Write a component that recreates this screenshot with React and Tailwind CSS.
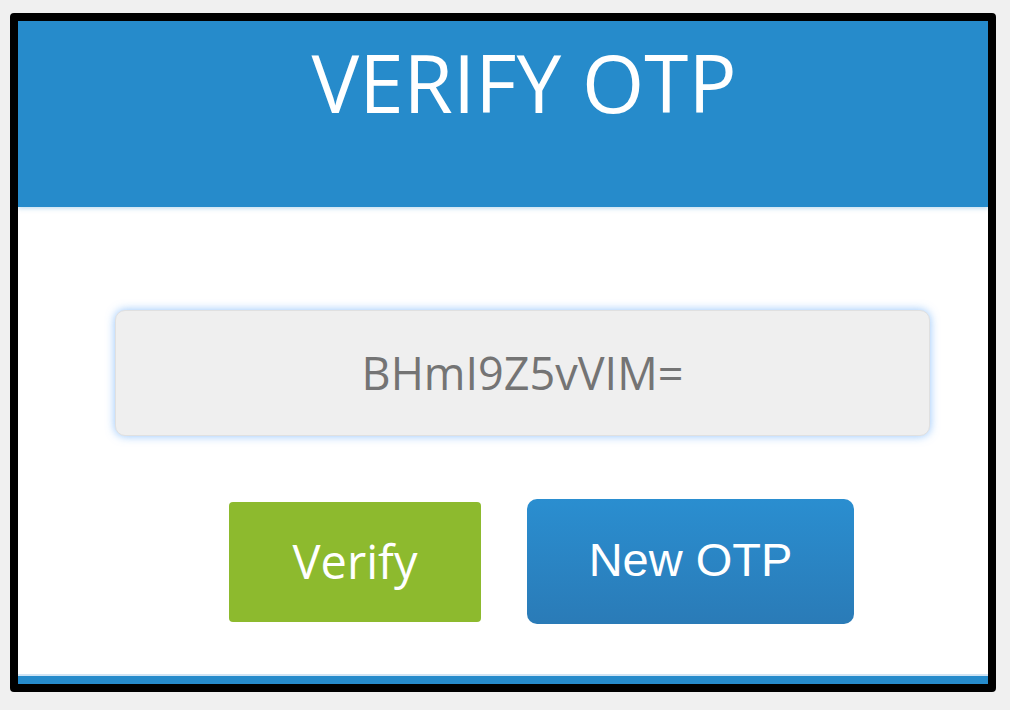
import React from 'react';

const App = () => {
    return (
        <div className="h-[710px] w-[1010px] bg-[#f0f0f0] pt-[13px] pl-[10px]" style={{ fontFamily: '"Open Sans", sans-serif' }}>
            <div className="w-[986px] h-[679px] border-8 border-black rounded-[4px] bg-white flex flex-col overflow-hidden">
                {/* header */}
                <div className="h-[186px] shrink-0 bg-[#268bcb] shadow-[0_2px_4px_rgba(38,139,203,0.25)] relative">
                    <h1 className="pt-[21px] pl-[42px] text-center text-white text-[80px] leading-none font-normal">
                        VERIFY OTP
                    </h1>
                </div>

                {/* body */}
                <div className="flex-1 flex flex-col">
                    <div className="mt-[103px] ml-[97px] mr-[58px] h-[126px] rounded-[10px] border border-[#e0e0e0] bg-[#efefef] shadow-[0_0_10px_rgba(100,170,250,0.7)] flex items-center justify-center">
                        <span className="text-[45px] text-[#747474]">BHmI9Z5vVIM=</span>
                    </div>

                    <div className="mt-[63px] ml-[211px] flex items-center gap-[46px]">
                        <button className="w-[252px] h-[120px] rounded-[4px] bg-[#8dba2e] text-white text-[47px] leading-none flex items-center justify-center">
                            Verify
                        </button>
                        <button
                            className="w-[327px] h-[125px] rounded-[10px] bg-gradient-to-b from-[#2a8ed0] to-[#2a7bb7] text-white text-[47px] leading-none flex items-center justify-center pb-[4px]"
                            style={{ fontFamily: '"Liberation Sans", Arial, sans-serif' }}
                        >
                            New OTP
                        </button>
                    </div>
                </div>

                {/* bottom strip */}
                <div className="h-[2px] shrink-0 bg-[#cfe4f5]" />
                <div className="h-[8px] shrink-0 bg-[#268bcb]" />
            </div>
        </div>
    );
};

export default App;
